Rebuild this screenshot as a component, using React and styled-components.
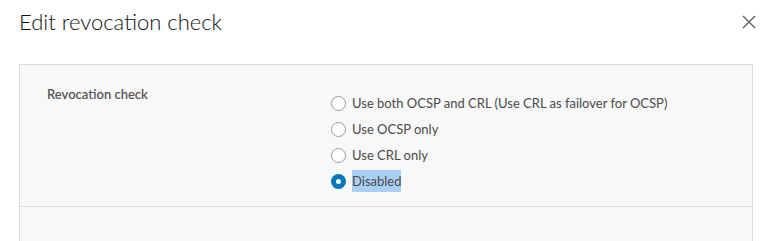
import React from "react";
import styled, { createGlobalStyle } from "styled-components";

const Global = createGlobalStyle`
  html, body { margin: 0; padding: 0; background: #ffffff; }
  body { font-family: "Lato", "Noto Sans", sans-serif; overflow: hidden; }
  * { box-sizing: border-box; }
`;

const Modal = styled.div`
  width: 768px;
  height: 241px;
  display: flex;
  flex-direction: column;
`;

const Header = styled.div`
  display: flex;
  justify-content: space-between;
  align-items: flex-start;
  padding: 9px 11px 0 19px;
  height: 64px;
`;

const Title = styled.h3`
  margin: 0;
  font-family: "Lato", "Open Sans", sans-serif;
  font-weight: 300;
  font-size: 22px;
  line-height: 26px;
  letter-spacing: 0;
  color: #111111;
`;

const CloseButton = styled.button`
  border: none;
  background: none;
  padding: 0;
  margin-top: 5px;
  width: 16px;
  height: 16px;
  display: flex;
  align-items: center;
  justify-content: center;
  cursor: pointer;
`;

const Panel = styled.div`
  margin: 0 15px 0 19px;
  flex: 1;
  border: 1px solid #dddddd;
  border-bottom: none;
  background: #f8f8f8;
  display: flex;
  flex-direction: column;
`;

const Section = styled.div`
  display: grid;
  grid-template-columns: 284px 1fr;
  padding: 20px 28px 12px 27px;
  border-bottom: 1px solid #e0e0e0;
`;

const FieldLabel = styled.div`
  font-size: 13px;
  line-height: 18px;
  font-weight: 600;
  color: #565656;
`;

const RadioList = styled.div`
  display: flex;
  flex-direction: column;
  margin-top: 5px;
`;

const RadioRow = styled.label`
  display: flex;
  align-items: center;
  height: 26px;
  gap: 6px;
  font-size: 13px;
  color: #4a4a4a;
  cursor: pointer;
`;

const Circle = styled.span`
  width: 15px;
  height: 15px;
  border-radius: 50%;
  flex: none;
  display: flex;
  align-items: center;
  justify-content: center;
  border: ${(p) => (p.$checked ? "none" : "1px solid #9a9a9a")};
  background: ${(p) => (p.$checked ? "#0079b8" : "#ffffff")};
  &::after {
    content: "";
    display: ${(p) => (p.$checked ? "block" : "none")};
    width: 5px;
    height: 5px;
    border-radius: 50%;
    background: #ffffff;
  }
`;

const OptionText = styled.span`
  line-height: 22px;
  background: ${(p) => (p.$selected ? "#aacff5" : "transparent")};
`;

const BlankSection = styled.div`
  flex: 1;
`;

const options = [
  "Use both OCSP and CRL (Use CRL as failover for OCSP)",
  "Use OCSP only",
  "Use CRL only",
  "Disabled",
];

export default function App() {
  return (
    <>
      <Global />
      <Modal>
        <Header>
          <Title>Edit revocation check</Title>
          <CloseButton aria-label="Close">
            <svg width="14" height="14" viewBox="0 0 14 14">
              <path d="M1 1 L13 13 M13 1 L1 13" stroke="#5a5a5a" strokeWidth="1.3" />
            </svg>
          </CloseButton>
        </Header>
        <Panel>
          <Section>
            <FieldLabel>Revocation check</FieldLabel>
            <RadioList>
              {options.map((o) => {
                const checked = o === "Disabled";
                return (
                  <RadioRow key={o}>
                    <Circle $checked={checked} />
                    <OptionText $selected={checked}>{o}</OptionText>
                  </RadioRow>
                );
              })}
            </RadioList>
          </Section>
          <BlankSection />
        </Panel>
      </Modal>
    </>
  );
}
